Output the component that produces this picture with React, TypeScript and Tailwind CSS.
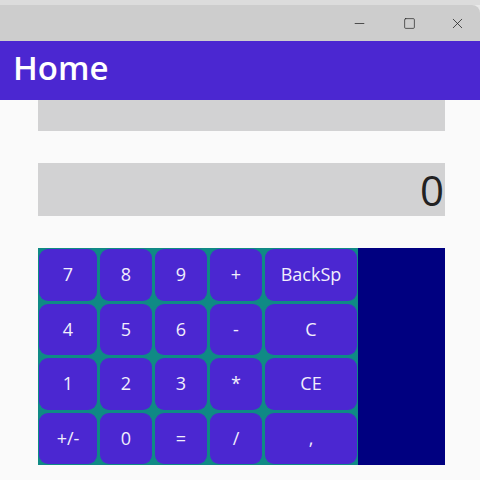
import { Minus, Square, X } from "lucide-react";

const keys: { label: string; wide?: boolean }[] = [
  { label: "7" }, { label: "8" }, { label: "9" }, { label: "+" }, { label: "BackSp", wide: true },
  { label: "4" }, { label: "5" }, { label: "6" }, { label: "-" }, { label: "C", wide: true },
  { label: "1" }, { label: "2" }, { label: "3" }, { label: "*" }, { label: "CE", wide: true },
  { label: "+/-" }, { label: "0" }, { label: "=" }, { label: "/" }, { label: ",", wide: true },
];

export default function App() {
  return (
    <div className="w-[480px] h-[480px] overflow-hidden bg-[#e9e9e9] flex flex-col" style={{ fontFamily: '"Open Sans", "Noto Sans", sans-serif' }}>
      <div className="h-[5px] bg-[#dcdcdc]" />
      <div className="flex-1 flex flex-col rounded-tr-lg overflow-hidden">
        <div className="h-[36px] bg-[#cdcdcd] flex items-center justify-end text-[#222]">
          <div className="w-[50px] flex justify-center"><Minus size={15} strokeWidth={1.2} /></div>
          <div className="w-[50px] flex justify-center"><Square size={13} strokeWidth={1.3} /></div>
          <div className="w-[46px] flex justify-center"><X size={17} strokeWidth={1.1} /></div>
        </div>
        <div className="h-[59px] bg-[#4b27d1] flex items-center px-[13px] pb-[6px]">
          <h1 className="text-white text-[33px] font-semibold leading-none">Home</h1>
        </div>
        <div className="flex-1 bg-[#fafafa] pl-[38px] pr-[35px] flex flex-col">
          <div className="h-[31px] bg-[#d2d2d3]" />
          <div className="h-[53px] mt-[32px] bg-[#d2d2d3] flex items-center justify-end pr-[1px]">
            <span className="text-[42px] font-normal text-[#222] leading-none">0</span>
          </div>
          <div className="mt-[32px] h-[217px] flex">
            <div className="w-[320px] bg-[#0f8a85] grid grid-cols-[58px_52px_52px_52px_92px] grid-rows-4 gap-[3px] p-[1px]">
              {keys.map((k) => (
                <button
                  key={k.label}
                  className="bg-[#4b27d1] rounded-[9px] text-[#f1eefc] text-[18px] flex items-center justify-center"
                >
                  {k.label}
                </button>
              ))}
            </div>
            <div className="flex-1 bg-[#000080]" />
          </div>
        </div>
      </div>
    </div>
  );
}
